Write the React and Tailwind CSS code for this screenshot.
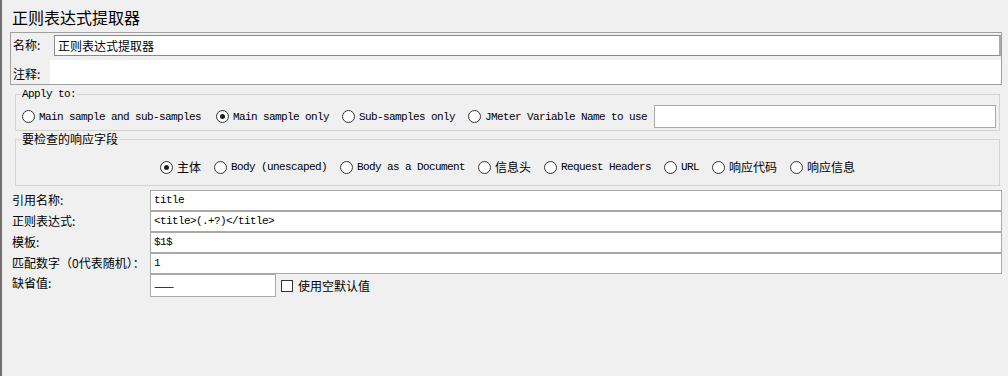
const cjk = { fontFamily: '"Noto Sans CJK SC", "Liberation Sans", sans-serif' }
const mono = { fontFamily: '"Liberation Mono", "Noto Sans CJK SC", monospace' }

function Radio({ checked, label, isMono }) {
  return (
    <label className="flex items-center gap-[4px] shrink-0">
      <span className="w-[13px] h-[13px] rounded-full border border-[#333] bg-white flex items-center justify-center">
        {checked && <span className="w-[5px] h-[5px] rounded-full bg-[#222]" />}
      </span>
      <span
        className={isMono ? 'text-[11px] tracking-[-0.6px] leading-[14px] text-black' : 'text-[12px] leading-[16px] text-black'}
        style={isMono ? mono : cjk}
      >
        {label}
      </span>
    </label>
  )
}

function Group({ title, titleMono, children, className }) {
  return (
    <div className={`relative ml-[13px] w-[985px] border border-[#d3d3d3] ${className}`}>
      <span
        className={`absolute left-[5px] px-[1px] bg-[#f0f0f0] ${titleMono ? '-top-[8px] text-[11px] tracking-[-0.6px] leading-[14px]' : '-top-[9px] text-[12px] leading-[16px]'}`}
        style={titleMono ? mono : cjk}
      >
        {title}
      </span>
      {children}
    </div>
  )
}

function FieldRow({ label, value }) {
  return (
    <div className="flex items-stretch h-[21px]">
      <div className="w-[148px] pl-[10px] text-[12px] leading-[19px] text-black" style={cjk}>
        {label}
      </div>
      <div
        className="w-[852px] bg-white border border-[#a9a9a9] pl-[3px] text-[11px] tracking-[-0.6px] leading-[19px] text-black"
        style={mono}
      >
        {value}
      </div>
    </div>
  )
}

export default function App() {
  return (
    <div className="w-[1008px] h-[376px] bg-[#f0f0f0] flex overflow-hidden">
      <div className="w-[2px] h-full bg-[#707070] shrink-0" />
      <div className="flex-1 flex flex-col">
        <div className="pl-[10px] pt-[5px] text-[16px] leading-[24px] text-black" style={cjk}>
          正则表达式提取器
        </div>

        {/* name / comments */}
        <div className="mt-[3px] ml-[8px] w-[992px] border border-[#a0a0a0] flex flex-col">
          <div className="flex items-center h-[24px]">
            <div className="w-[43px] pl-[2px] text-[12px] leading-[16px]" style={cjk}>名称:</div>
            <div
              className="flex-1 h-[21px] bg-white border border-[#8a8a8a] border-r-2 border-r-[#a8a8a8] pl-[3px] text-[12px] leading-[19px]"
              style={cjk}
            >
              正则表达式提取器
            </div>
          </div>
          <div className="flex h-[27px]">
            <div className="w-[39px] pl-[2px] text-[12px] leading-[16px] pt-[9px]" style={cjk}>注释:</div>
            <div className="flex-1 mt-[3px] bg-white" />
          </div>
        </div>

        {/* apply to */}
        <Group title="Apply to:" titleMono className="mt-[9px]">
          <div className="flex items-center pl-[6px] pt-[10px] pb-[2px]">
            <Radio label="Main sample and sub-samples" isMono />
            <div className="w-[15px]" />
            <Radio checked label="Main sample only" isMono />
            <div className="w-[13px]" />
            <Radio label="Sub-samples only" isMono />
            <div className="w-[13px]" />
            <Radio label="JMeter Variable Name to use" isMono />
            <div className="w-[7px]" />
            <div className="w-[342px] h-[23px] bg-white border border-[#a9a9a9]" />
          </div>
        </Group>

        {/* response field */}
        <Group title="要检查的响应字段" className="mt-[8px]">
          <div className="flex items-center justify-center gap-[13px] pt-[19px] pb-[10px] h-[45px]">
            <Radio checked label="主体" />
            <Radio label="Body (unescaped)" isMono />
            <Radio label="Body as a Document" isMono />
            <Radio label="信息头" />
            <Radio label="Request Headers" isMono />
            <Radio label="URL" isMono />
            <Radio label="响应代码" />
            <Radio label="响应信息" />
          </div>
        </Group>

        {/* fields */}
        <div className="mt-[4px] flex flex-col">
          <FieldRow label="引用名称:" value="title" />
          <FieldRow label="正则表达式:" value="<title>(.+?)</title>" />
          <FieldRow label="模板:" value="$1$" />
          <FieldRow label="匹配数字（0代表随机）：" value="1" />
          <div className="flex items-start h-[23px]">
            <div className="w-[148px] pl-[10px] text-[12px] leading-[18px] text-black" style={cjk}>
              缺省值:
            </div>
            <div
              className="w-[126px] h-[23px] bg-white border border-[#a9a9a9] pl-[3px] text-[12px] leading-[21px]"
              style={cjk}
            >
              ——
            </div>
            <label className="flex items-center gap-[5px] ml-[5px] h-[23px]">
              <span className="w-[12px] h-[12px] border border-[#333] bg-white" />
              <span className="text-[12px] leading-[16px] text-black" style={cjk}>使用空默认值</span>
            </label>
          </div>
        </div>
      </div>
    </div>
  )
}
